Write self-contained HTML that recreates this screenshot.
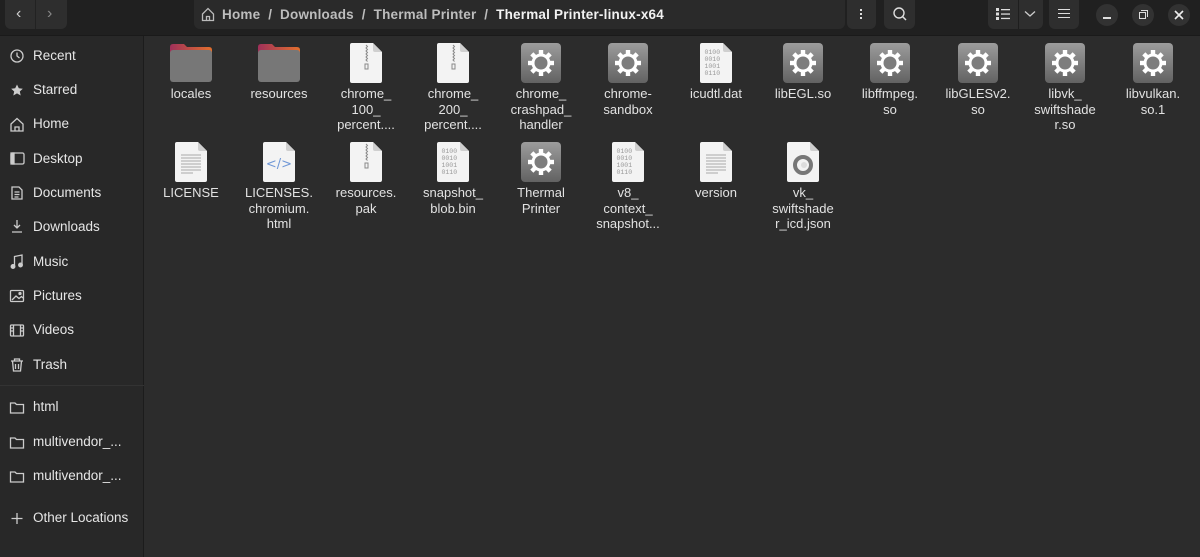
<!DOCTYPE html>
<html><head><meta charset="utf-8">
<style>
*{margin:0;padding:0;box-sizing:border-box}
body{width:1200px;height:557px;background:#2c2c2c;font-family:"Liberation Sans","DejaVu Sans",sans-serif;color:#e8e8e8;position:relative;overflow:hidden;font-size:13px}
.hdr{position:absolute;left:0;top:0;width:1200px;height:36px;background:#202020;border-bottom:1px solid #1a1a1a}
.btn{position:absolute;background:#2e2e2e;border-radius:0 0 6px 6px}
.side{position:absolute;left:0;top:36px;width:144px;height:521px;background:#282828;border-right:1px solid #1c1c1c}
.si{position:absolute;left:33px;font-size:13.5px;color:#e6e6e6;line-height:16px}
.it{position:absolute;width:88px;text-align:center;font-size:13px;line-height:15.5px;color:#e2e2e2}
.it svg{display:block;margin:0 auto 1px}
.circ{position:absolute;top:4px;width:22px;height:22px;border-radius:50%;background:#323232}
</style></head><body>
<svg width="0" height="0" style="position:absolute">
<defs>
<linearGradient id="gg" x1="0" y1="0" x2="0" y2="1"><stop offset="0" stop-color="#9c9c9c"/><stop offset="1" stop-color="#626262"/></linearGradient>
<linearGradient id="ft" x1="0" y1="0" x2="1" y2="0"><stop offset="0" stop-color="#a0305a"/><stop offset="1" stop-color="#e2702e"/></linearGradient>
<symbol id="folder" viewBox="0 0 44 44"><path d="M1 6 q0-3 3-3 h11 l3 3 h22 q3 0 3 3 v4 H1z" fill="url(#ft)"/><rect x="1" y="9" width="42" height="32" rx="3" fill="#777"/></symbol>
<symbol id="page" viewBox="0 0 44 44"><path d="M8 2 h21 l9 9 v29 q0 2-2 2 H8 q-2 0-2-2 V4 q0-2 2-2z" fill="#f3f3f3"/><path d="M29 2 v7 q0 2 2 2 h7z" fill="#cfcfcf"/></symbol>
<symbol id="gear" viewBox="0 0 44 44"><rect x="2" y="2" width="40" height="40" rx="4" fill="url(#gg)"/><g fill="#fff" transform="translate(22 22)"><circle r="9.5"/><g id="t"><rect x="-2.2" y="-13" width="4.4" height="6"/></g><use href="#t" transform="rotate(45)"/><use href="#t" transform="rotate(90)"/><use href="#t" transform="rotate(135)"/><use href="#t" transform="rotate(180)"/><use href="#t" transform="rotate(225)"/><use href="#t" transform="rotate(270)"/><use href="#t" transform="rotate(315)"/></g><circle cx="22" cy="22" r="6.5" fill="#7d7d7d"/></symbol>
<symbol id="zip" viewBox="0 0 44 44"><use href="#page"/><path d="M22 4 l1.5 1.5 -1.5 1.5 1.5 1.5 -1.5 1.5 1.5 1.5 -1.5 1.5 1.5 1.5 -1.5 1.5 1.5 1.5 -1.5 1.5 1.5 1.5" stroke="#888" fill="none"/><rect x="21" y="23" width="3" height="5" fill="none" stroke="#888"/></symbol>
<symbol id="bin" viewBox="0 0 44 44"><use href="#page"/><g font-family="Liberation Mono,monospace" font-size="6.5" fill="#999"><text x="10.5" y="13">0100</text><text x="10.5" y="20">0010</text><text x="10.5" y="27">1001</text><text x="10.5" y="34">0110</text></g></symbol>
<symbol id="txt" viewBox="0 0 44 44"><use href="#page"/><g stroke="#aaa" stroke-width="1"><path d="M12 15h20M12 18h20M12 21h20M12 24h20M12 27h20M12 30h20M12 33h12"/></g></symbol>
<symbol id="html" viewBox="0 0 44 44"><use href="#page"/><text x="22" y="28" text-anchor="middle" font-size="13" fill="#6f97d6" font-family="DejaVu Sans,sans-serif">&lt;/&gt;</text></symbol>
<symbol id="json" viewBox="0 0 44 44"><use href="#page"/><circle cx="22" cy="25" r="8" fill="none" stroke="#777" stroke-width="4"/><circle cx="23" cy="25" r="3" fill="#ddd"/></symbol>
</defs></svg>

<div class="hdr"></div>
<div class="btn" style="left:5px;top:0;width:62px;height:29px"></div>
<div style="position:absolute;left:35px;top:0;width:1px;height:29px;background:#222"></div>
<div style="position:absolute;left:16px;top:5px;color:#ccc;font-size:16px">&#x2039;</div>
<div style="position:absolute;left:47px;top:5px;color:#888;font-size:16px">&#x203A;</div>
<div class="btn" style="left:194px;top:0;width:651px;height:29px;background:#2a2a2a"></div>
<svg style="position:absolute;left:201px;top:7px" width="14" height="15" viewBox="0 0 14 15"><path d="M1.5 7 L7 1.5 12.5 7 V13.5 H1.5Z M5.5 13.5 V9.5 H8.5 V13.5" fill="none" stroke="#bbb" stroke-width="1.3"/></svg>
<div style="position:absolute;left:222px;top:7px;font-weight:bold;font-size:13.5px;color:#bdbdbd;white-space:pre;letter-spacing:0.2px">Home  /  Downloads  /  Thermal Printer  /  <span style="color:#f2f2f2">Thermal Printer-linux-x64</span></div>
<div class="btn" style="left:847px;top:0;width:29px;height:29px"></div>
<div style="position:absolute;left:860px;top:9px;width:2px;height:2px;background:#ddd;box-shadow:0 4px #ddd,0 8px #ddd"></div>
<div class="btn" style="left:884px;top:0;width:31px;height:29px"></div>
<svg style="position:absolute;left:892px;top:6px" width="16" height="16"><circle cx="7" cy="7" r="5" fill="none" stroke="#ddd" stroke-width="1.4"/><path d="M10.5 10.5 L14 14" stroke="#ddd" stroke-width="1.5"/></svg>
<div class="btn" style="left:988px;top:0;width:55px;height:29px"></div>
<div style="position:absolute;left:1018px;top:0;width:1px;height:29px;background:#1e1e1e"></div>
<svg style="position:absolute;left:996px;top:8px" width="14" height="12"><g fill="#ddd"><rect x="0" y="0" width="3" height="3"/><rect x="0" y="4.5" width="3" height="3"/><rect x="0" y="9" width="3" height="3"/><rect x="5" y="1" width="9" height="1.3"/><rect x="5" y="5.4" width="9" height="1.3"/><rect x="5" y="9.8" width="9" height="1.3"/></g></svg>
<svg style="position:absolute;left:1024px;top:10px" width="12" height="8"><path d="M1 1.5 L6 6 11 1.5" fill="none" stroke="#ccc" stroke-width="1.3"/></svg>
<div class="btn" style="left:1049px;top:0;width:30px;height:29px"></div>
<div style="position:absolute;left:1058px;top:9px;width:12px;height:1.3px;background:#ddd;box-shadow:0 4px #ddd,0 8px #ddd"></div>
<div class="circ" style="left:1096px"></div><div style="position:absolute;left:1103px;top:17px;width:8px;height:1.5px;background:#ddd"></div>
<div class="circ" style="left:1132px"></div><div style="position:absolute;left:1139px;top:12px;width:7px;height:7px;border:1.3px solid #ddd"></div><div style="position:absolute;left:1141px;top:10px;width:7px;height:7px;border-top:1.3px solid #ddd;border-right:1.3px solid #ddd"></div>
<div class="circ" style="left:1168px"></div><svg style="position:absolute;left:1174px;top:10px" width="10" height="10"><path d="M1 1L9 9M9 1L1 9" stroke="#eee" stroke-width="1.6"/></svg>

<div class="side"></div>
<svg style="position:absolute;left:0;top:0" width="144" height="557" fill="none" stroke="#ccc" stroke-width="1.3">
<circle cx="17" cy="56" r="6"/><path d="M17 52.5 V56 L19.5 58"/>
<path d="M17 84.5 l1.8 3.8 4 .4 -3 2.8 .9 4 -3.7-2.1 -3.7 2.1 .9-4 -3-2.8 4-.4z" fill="#ccc" stroke="none"/>
<path d="M11 124 L17 118.5 23 124 V131 H11Z M15 131 V127 H19 V131"/>
<rect x="11" y="153" width="13" height="11" rx="1.5"/><rect x="11" y="153" width="3" height="11" fill="#ccc"/>
<path d="M12 187 h7 l3 3 v9 h-10z M14.5 192h5M14.5 194.5h5M14.5 197h4"/>
<path d="M17 220 v8 M14 225 l3 3 3-3 M12 232 h10"/>
<path d="M14.5 266.5 V256.5 L22 255 V265" /><circle cx="13" cy="266.5" r="1.8" fill="#ccc"/><circle cx="20.5" cy="265" r="1.8" fill="#ccc"/>
<rect x="10.5" y="290.5" width="13" height="11" rx="1"/><path d="M12 300 l4-4 3 2.5 2.5-2 1.5 1.5" /><circle cx="20" cy="293.5" r="1" fill="#ccc"/>
<rect x="10.5" y="325" width="13" height="11" rx="1"/><path d="M13.5 325v11M20.5 325v11M10.5 328h3M10.5 331h3M20.5 328h3M20.5 331h3"/>
<path d="M11 361 h12 M14.5 361 v-2 h5 v2 M12.5 361 l1 10 h7 l1-10 M15.5 364 v5 M18.5 364 v5"/>
<path d="M10.5 403 h4.5 l1.5 1.5 h7 v8.5 h-13z"/>
<path d="M10.5 438 h4.5 l1.5 1.5 h7 v8.5 h-13z"/>
<path d="M10.5 472 h4.5 l1.5 1.5 h7 v8.5 h-13z"/>
<path d="M17 513 v11 M11.5 518.5 h11"/>
</svg>
<div style="position:absolute;left:0;top:385px;width:144px;height:1px;background:#333"></div>
<div class="si" style="top:48px">Recent</div>
<div class="si" style="top:82px">Starred</div>
<div class="si" style="top:116px">Home</div>
<div class="si" style="top:151px">Desktop</div>
<div class="si" style="top:185px">Documents</div>
<div class="si" style="top:219px">Downloads</div>
<div class="si" style="top:254px">Music</div>
<div class="si" style="top:288px">Pictures</div>
<div class="si" style="top:322px">Videos</div>
<div class="si" style="top:357px">Trash</div>
<div class="si" style="top:399px">html</div>
<div class="si" style="top:434px">multivendor_...</div>
<div class="si" style="top:468px">multivendor_...</div>
<div class="si" style="top:510px">Other Locations</div>

<div class="it" style="left:147px;top:41px"><svg width="44" height="44"><use href="#folder"/></svg>locales</div>
<div class="it" style="left:235px;top:41px"><svg width="44" height="44"><use href="#folder"/></svg>resources</div>
<div class="it" style="left:322px;top:41px"><svg width="44" height="44"><use href="#zip"/></svg>chrome_<br>100_<br>percent....</div>
<div class="it" style="left:409px;top:41px"><svg width="44" height="44"><use href="#zip"/></svg>chrome_<br>200_<br>percent....</div>
<div class="it" style="left:497px;top:41px"><svg width="44" height="44"><use href="#gear"/></svg>chrome_<br>crashpad_<br>handler</div>
<div class="it" style="left:584px;top:41px"><svg width="44" height="44"><use href="#gear"/></svg>chrome-<br>sandbox</div>
<div class="it" style="left:672px;top:41px"><svg width="44" height="44"><use href="#bin"/></svg>icudtl.dat</div>
<div class="it" style="left:759px;top:41px"><svg width="44" height="44"><use href="#gear"/></svg>libEGL.so</div>
<div class="it" style="left:846px;top:41px"><svg width="44" height="44"><use href="#gear"/></svg>libffmpeg.<br>so</div>
<div class="it" style="left:934px;top:41px"><svg width="44" height="44"><use href="#gear"/></svg>libGLESv2.<br>so</div>
<div class="it" style="left:1021px;top:41px"><svg width="44" height="44"><use href="#gear"/></svg>libvk_<br>swiftshade<br>r.so</div>
<div class="it" style="left:1109px;top:41px"><svg width="44" height="44"><use href="#gear"/></svg>libvulkan.<br>so.1</div>

<div class="it" style="left:147px;top:140px"><svg width="44" height="44"><use href="#txt"/></svg>LICENSE</div>
<div class="it" style="left:235px;top:140px"><svg width="44" height="44"><use href="#html"/></svg>LICENSES.<br>chromium.<br>html</div>
<div class="it" style="left:322px;top:140px"><svg width="44" height="44"><use href="#zip"/></svg>resources.<br>pak</div>
<div class="it" style="left:409px;top:140px"><svg width="44" height="44"><use href="#bin"/></svg>snapshot_<br>blob.bin</div>
<div class="it" style="left:497px;top:140px"><svg width="44" height="44"><use href="#gear"/></svg>Thermal<br>Printer</div>
<div class="it" style="left:584px;top:140px"><svg width="44" height="44"><use href="#bin"/></svg>v8_<br>context_<br>snapshot...</div>
<div class="it" style="left:672px;top:140px"><svg width="44" height="44"><use href="#txt"/></svg>version</div>
<div class="it" style="left:759px;top:140px"><svg width="44" height="44"><use href="#json"/></svg>vk_<br>swiftshade<br>r_icd.json</div>
</body></html>
